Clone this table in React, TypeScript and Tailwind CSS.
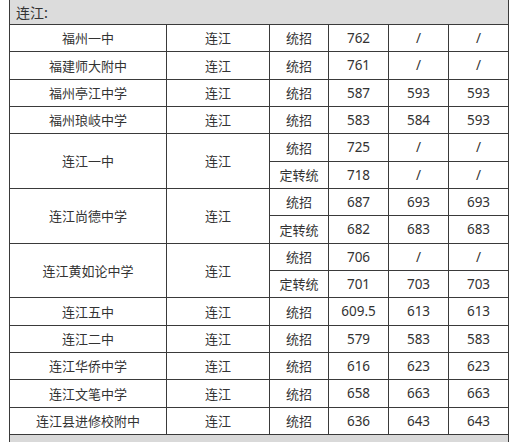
const ROWS: { name: string; area: string; subs: [string, string, string, string][] }[] = [
  { name: '福州一中', area: '连江', subs: [['统招', '762', '/', '/']] },
  { name: '福建师大附中', area: '连江', subs: [['统招', '761', '/', '/']] },
  { name: '福州亭江中学', area: '连江', subs: [['统招', '587', '593', '593']] },
  { name: '福州琅岐中学', area: '连江', subs: [['统招', '583', '584', '593']] },
  { name: '连江一中', area: '连江', subs: [['统招', '725', '/', '/'], ['定转统', '718', '/', '/']] },
  { name: '连江尚德中学', area: '连江', subs: [['统招', '687', '693', '693'], ['定转统', '682', '683', '683']] },
  { name: '连江黄如论中学', area: '连江', subs: [['统招', '706', '/', '/'], ['定转统', '701', '703', '703']] },
  { name: '连江五中', area: '连江', subs: [['统招', '609.5', '613', '613']] },
  { name: '连江二中', area: '连江', subs: [['统招', '579', '583', '583']] },
  { name: '连江华侨中学', area: '连江', subs: [['统招', '616', '623', '623']] },
  { name: '连江文笔中学', area: '连江', subs: [['统招', '658', '663', '663']] },
  { name: '连江县进修校附中', area: '连江', subs: [['统招', '636', '643', '643']] },
];

const cell = 'border border-[#3a3a3a] text-center align-middle p-0';
const num = `${cell} font-['Noto_Sans','Noto_Sans_CJK_SC',sans-serif] text-[13.5px]`;

export default function App() {
  return (
    <div className="w-[521px] h-[442px] overflow-hidden bg-white pl-[9px] font-['Noto_Sans_CJK_SC',sans-serif] text-[13px] text-[#333]">
      <table className="-mt-px w-[499px] table-fixed border-collapse">
        <colgroup>
          <col className="w-[157px]" />
          <col className="w-[103px]" />
          <col className="w-[59px]" />
          <col className="w-[60px]" />
          <col className="w-[60px]" />
          <col className="w-[60px]" />
        </colgroup>
        <tbody>
          <tr className="h-[25px]">
            <td colSpan={6} className="border border-[#3a3a3a] bg-[#dcdcdc] pl-[6px] text-left text-[14px] align-middle">
              连江:
            </td>
          </tr>
          {ROWS.map(r =>
            r.subs.map((s, i) => (
              <tr key={r.name + i} className="h-[27.33px]">
                {i === 0 && (
                  <>
                    <td rowSpan={r.subs.length} className={cell}>{r.name}</td>
                    <td rowSpan={r.subs.length} className={cell}>{r.area}</td>
                  </>
                )}
                <td className={cell}>{s[0]}</td>
                <td className={num}>{s[1]}</td>
                <td className={num}>{s[2]}</td>
                <td className={num}>{s[3]}</td>
              </tr>
            ))
          )}
          <tr className="h-[27px]">
            <td colSpan={6} className="border border-[#3a3a3a] bg-[#d9d9d9] pl-[6px] text-left align-top pt-[5px] text-[#888]">
              备注:
            </td>
          </tr>
        </tbody>
      </table>
    </div>
  );
}
